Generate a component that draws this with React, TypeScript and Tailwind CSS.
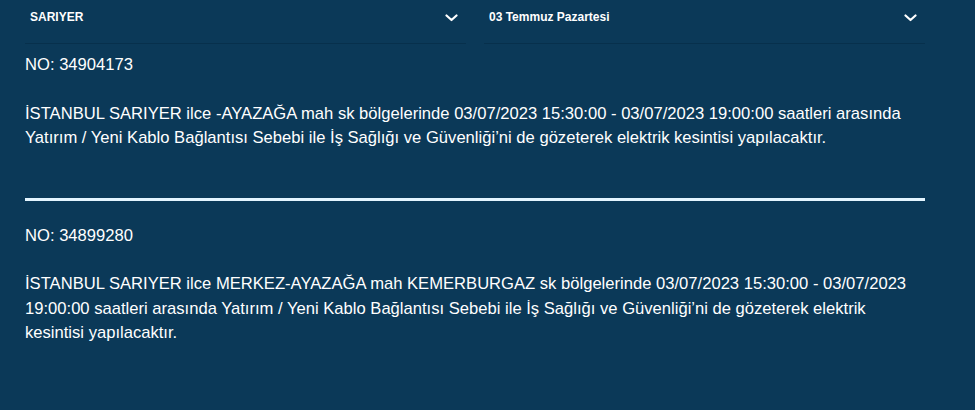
import React from "react";

const outages = [
  {
    no: "34904173",
    text: "İSTANBUL SARIYER ilce -AYAZAĞA mah sk bölgelerinde 03/07/2023 15:30:00 - 03/07/2023 19:00:00 saatleri arasında Yatırım / Yeni Kablo Bağlantısı Sebebi ile İş Sağlığı ve Güvenliği’ni de gözeterek elektrik kesintisi yapılacaktır.",
  },
  {
    no: "34899280",
    text: "İSTANBUL SARIYER ilce MERKEZ-AYAZAĞA mah KEMERBURGAZ sk bölgelerinde 03/07/2023 15:30:00 - 03/07/2023 19:00:00 saatleri arasında Yatırım / Yeni Kablo Bağlantısı Sebebi ile İş Sağlığı ve Güvenliği’ni de gözeterek elektrik kesintisi yapılacaktır.",
  },
];

const Chevron = () => (
  <svg width="13" height="8" viewBox="0 0 13 8" fill="none">
    <path d="M1.5 1.5 L6.5 6 L11.5 1.5" stroke="white" strokeWidth="2.2" strokeLinecap="round" strokeLinejoin="round" />
  </svg>
);

const SelectBox = ({ label }: { label: string }) => (
  <div className="flex h-[44px] items-start justify-between border-b border-[#07304c] pl-[5px] pr-[8px] pt-[10px]">
    <span className="text-[12px] font-bold leading-[14px] text-white">{label}</span>
    <span className="mt-[4px]">
      <Chevron />
    </span>
  </div>
);

export default function App() {
  return (
    <div className="h-[410px] w-[975px] overflow-hidden bg-[#0b3958] pl-[25px] pr-[50px] font-['Liberation_Sans',Arial,sans-serif] text-white">
      <div className="grid grid-cols-2 gap-[18px]">
        <SelectBox label="SARIYER" />
        <SelectBox label="03 Temmuz Pazartesi" />
      </div>
      {/* Outage list */}
      <div className="flex flex-col">
        {outages.map((item, i) => (
          <div key={item.no} className="flex flex-col">
            {i > 0 && <div className="mb-[23px] h-[3px] w-full bg-[#e4f5ff]" />}
            <div className={`text-[16.6px] leading-[24.5px] ${i === 0 ? "mt-[9px]" : ""}`}>
              <p>NO: {item.no}</p>
              <p className="mt-[24px]">{item.text}</p>
            </div>
            {i === 0 && <div className="h-[47px]" />}
          </div>
        ))}
      </div>
    </div>
  );
}
